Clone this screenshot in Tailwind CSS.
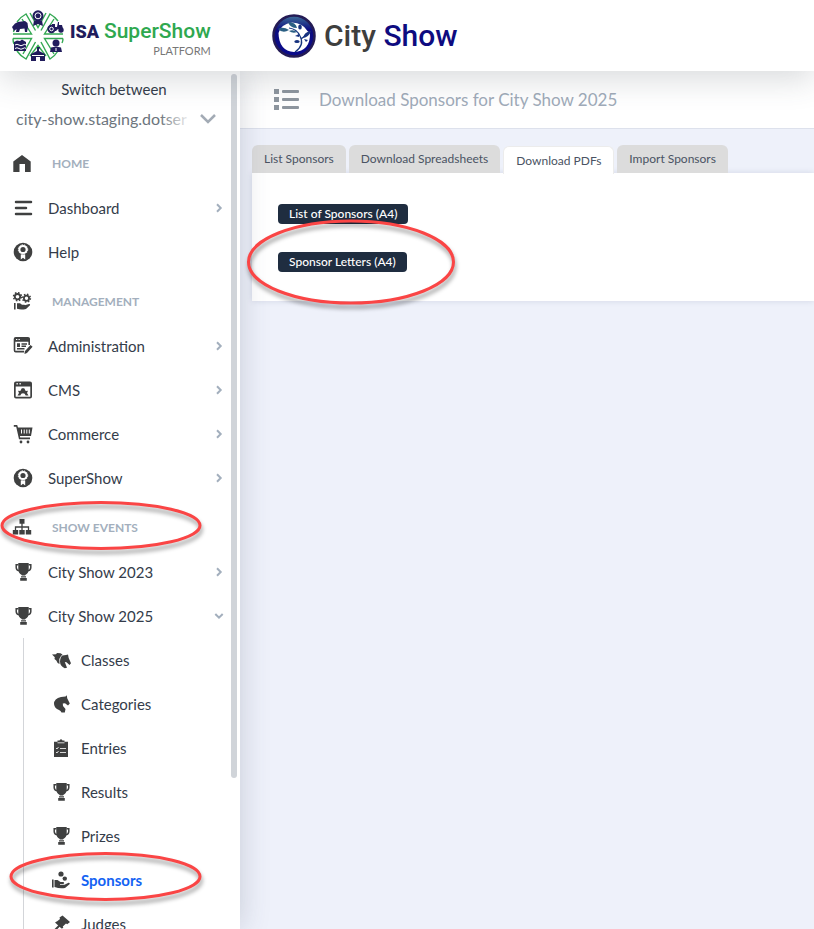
<!DOCTYPE html>
<html lang="en">
<head>
<meta charset="utf-8">
<meta name="viewport" content="width=device-width, initial-scale=1">
<title>Download Sponsors for City Show 2025</title>
<script src="https://cdn.jsdelivr.net/npm/@tailwindcss/browser@4"></script>
</head>
<body class="relative flex h-screen flex-col overflow-hidden bg-[#eef1fa] font-[Lato,sans-serif] text-[15px] text-[#343c4a]">

<!-- Icon library -->
<svg class="hidden" aria-hidden="true">
  <symbol id="home" viewBox="0 0 20 20"><path d="M10 1 18.700 7.400V18H13V10H7.500V18H1.300V7.400Z"/></symbol>
  <symbol id="lines" viewBox="0 0 20 20"><g fill="none" stroke="currentColor" stroke-width="2.500" stroke-linecap="round"><path d="M3 4H18M3 10H13M3 16H18"/></g></symbol>
  <symbol id="rosette" viewBox="0 0 20 20"><circle cx="10" cy="10" r="9.300"/><circle cx="10" cy="7.500" r="3.600" fill="none" stroke="#fff" stroke-width="2"/><circle cx="10" cy="7.500" r="4.700" fill="none" stroke="#fff" stroke-width="1" stroke-dasharray="1.500 1"/><path fill="#fff" d="M7.800 12.500H12.200V17.500L10 15.800 7.800 17.500Z"/></symbol>
  <symbol id="gears" viewBox="0 0 20 20"><g fill="none" stroke="currentColor"><circle cx="5.500" cy="4.700" r="2.700" stroke-width="1.800"/><circle cx="5.500" cy="4.700" r="4" stroke-width="1.500" stroke-dasharray="1.600 1.540"/><circle cx="14.500" cy="6.200" r="2.600" stroke-width="1.800"/><circle cx="14.500" cy="6.200" r="3.900" stroke-width="1.500" stroke-dasharray="1.500 1.560"/></g><path d="M2 11H3.600V17.500H2ZM5 11.300H8L10 12.700H12.500Q13.500 13.700 12 14.200H9.500L17 12Q18.600 12 18 13.300L14 17Q9 18.300 5 16.800Z"/></symbol>
  <symbol id="form" viewBox="0 0 20 20"><g fill="none" stroke="currentColor" stroke-width="1.600"><path d="M16.200 9V3Q16.200 1.700 15 1.700H2.700Q1.500 1.700 1.500 3V14.200Q1.500 15.600 2.700 15.600H11"/><path d="M8.500 8H14M8.500 10.300H13M4 12.800H11.500"/></g><path d="M1.500 2H16.500V5.800H1.500ZM4 7.300H7V11H4ZM17.500 9 19.600 10.800 14 17 11.500 18 11.800 15.300Z"/><path d="M3 3.500H4.300M5.500 3.500H6.800" stroke="#fff"/></symbol>
  <symbol id="cms" viewBox="0 0 20 20"><path fill-rule="evenodd" d="M3 1.500H17Q19 1.500 19 3.500V16.500Q19 18.500 17 18.500H3Q1 18.500 1 16.500V3.500Q1 1.500 3 1.500ZM2.700 6.500V16.700H17.300V6.500Z"/><path d="M3.500 3.700H4.800M6.500 3.700H7.800" stroke="#fff" stroke-width="1.500"/><path d="M4.500 15.500 6 13 5 10.800 7.300 11 8.800 8.300H11.200L12.700 11 15 10.800 14 13 15.500 15.500H12.700Q12 13.200 10 13.200T7.300 15.500Z"/></symbol>
  <symbol id="cart" viewBox="0 0 20 20"><path d="M.8 1H4.200L5 3.500H19.500L18 12H6.900L7.200 13.600H17V15.200H6L3.200 2.700H.8Z"/><path d="M8.500 5.500V9.500M11.200 5.500V9.500M13.800 5.500V9.500M16.300 5.500V9.500" stroke="#fff" stroke-width="1"/><circle cx="8" cy="18" r="1.400"/><circle cx="15" cy="18" r="1.400"/></symbol>
  <symbol id="tree" viewBox="0 0 20 20"><path d="M7.500 1H12.500V5.800H7.500ZM.8 12H6.200V16.500H.8ZM7.300 12H12.700V16.500H7.300ZM13.800 12H19.200V16.500H13.800Z"/><path d="M3.500 12.500V9H16.500V12.500M10 5V12.500" fill="none" stroke="currentColor" stroke-width="1.300"/></symbol>
  <symbol id="trophy" viewBox="0 0 20 20"><path d="M5.300 .9H15.700V7Q15.700 11.500 12.200 12.900V13.600H8.800V12.900Q5.300 11.500 5.300 7ZM8 14.300H13V15.400H8ZM7.200 16H13.800V18.700H7.200Z"/><path d="M5.500 2.700H3.200V5.500Q3.300 8.200 6 8.700M15.500 2.700H17.800V5.500Q17.700 8.200 15 8.700" fill="none" stroke="currentColor" stroke-width="1.500"/></symbol>
  <symbol id="horses" viewBox="0 0 20 20"><path d="M1 4.500 5 4.200 6 3 9.500 3.300 11.500 4.600 10 6 8.300 9 8.500 14Q6 13 5.300 10.500L3.500 9 3.800 7.200Z"/><path d="M11.300 5.500 15 5 17 4.500 17.700 8 20 13.200 18.500 15 15.500 12.300 13.800 12 16 17.700 13.800 18.300Q9 16 9 11.500Q9.300 7 11.300 5.500Z"/></symbol>
  <symbol id="horse" viewBox="0 0 20 20"><path d="M10 3 14.500 2.600 15.800 1.300 16.200 4.300 18.800 9.500 17 11.500 14 9.300 11.800 9.600 12 12 14.500 15 13.800 18.500H10.500Q9.800 16.800 8 16Q3.500 14.500 3 10Q3 4.500 10 3Z"/></symbol>
  <symbol id="clipboard" viewBox="0 0 20 20"><path d="M3 3.800H6.500V2.500H8.500Q10 -.2 11.500 2.500H13.500V3.800H17V19H3Z"/><path d="M6.500 4.800H13.500M5 10 6 11 7.500 9M5 14 6 15 7.500 13M9 10.500H15M9 14.500H15" fill="none" stroke="#fff" stroke-width=".8"/></symbol>
  <symbol id="give" viewBox="0 0 20 20"><circle cx="10" cy="4" r="2.600"/><circle cx="13.800" cy="8.600" r="2.200"/><path d="M1 9.500H2.600V17.500H1ZM3.500 10H6.500L9.500 12H12.500Q14 13.500 12 14H9V14.700H13.500L17.500 12.700Q19.500 12.500 18.500 14.200L14 18Q9 19 3.500 17Z"/></symbol>
  <symbol id="gavel" viewBox="0 0 20 20"><path d="M8.500 3.500 11.500 1.500 19 8 16.200 10.200 15 9.600 11.800 12.500 12.300 14 10.500 14.500 4 8.500 6.500 7 9 5Z"/><path d="M9 11 2 18" stroke="currentColor" stroke-width="2"/></symbol>
  <symbol id="chev" viewBox="0 0 8 10"><path d="M2 1.300 5.700 5 2 8.700" fill="none" stroke="currentColor" stroke-width="2"/></symbol>
</svg>

<header class="relative z-20 flex h-[71px] shrink-0 items-center bg-white shadow-[0_8px_32px_rgba(60,70,80,0.2)]">
  <a href="#" class="flex w-60 shrink-0 items-center gap-1.5 pl-3" aria-label="ISA SuperShow Platform">
    <svg class="size-[52px] shrink-0" viewBox="0 0 52 52" aria-hidden="true">
      <g fill="none" stroke="#34a853" stroke-width="1.400">
        <path d="M5 12A25 25 0 0 1 14 4L23.500 20.500M29 20.500 38 4A25 25 0 0 1 46 11M18 3 26 17.500 34 3M1.500 22A25 25 0 0 1 2 20M10 9 19.500 24H1M42 9 32.500 24H51M1 28.500H19.500L11 44M51 28.500H32.500L42 44M5 41A25 25 0 0 0 14 49L23.500 32M29 32 38 49A25 25 0 0 0 46 41M18 46 26 35.500 34 46M1 28.500Q1 32 2 34M51 28.500Q51 31 50 33"/>
      </g>
      <g fill="#211c5c">
        <circle cx="26" cy="5.800" r="5.500"/><path d="M22 10.500H30L31 16 26 14 21 16Z"/>
        <path d="M0 17 3 13.500 6 12 13 11 15.500 13 16 17 15 22H13L12.500 18.500 8 19 7 22H4L4.500 19 2 21Z"/>
        <path d="M40 14H43V17H45L46 12H47V15H50L51 19H46L44 21H40Z"/><circle cx="39.500" cy="19" r="4.200"/><circle cx="49" cy="20" r="2.700"/>
        <path d="M2 32 5 30.500 8 31 10 29.500 14 32V41H2Z"/>
        <circle cx="44" cy="33" r="3.500"/><path d="M38 42 39 37.500 44 36.500 49 37.500 50 42Z"/>
        <path d="M19 51V44L25 41V37H28V38.500H27V41L33 44V51H28V47H24V51Z"/>
      </g>
      <g fill="none" stroke="#fff"><circle cx="26" cy="5.800" r="3"/><circle cx="39.500" cy="19" r="1.800"/><path d="M3 35Q5 33.500 7 35T11 35 14 35M3 38.500Q5 37 7 38.500T11 38.500 14 38.500M44 38V41M20 45.500H32"/></g>
    </svg>
    <span class="flex flex-col items-end pt-1">
      <span class="flex items-baseline gap-[5px] leading-[26px]"><b class="font-[Roboto,sans-serif] text-[18px] font-black text-[#211c5c]">ISA</b><span class="font-[Roboto,sans-serif] text-[21px] font-medium text-[#2fa84f]">SuperShow</span></span>
      <span class="text-[11px] leading-3 text-[#777]">PLATFORM</span>
    </span>
  </a>
  <a href="#" class="flex items-center gap-2 pl-8">
    <svg class="size-11 shrink-0" viewBox="0 0 44 44" aria-hidden="true">
      <defs><linearGradient id="ring" x1="0" y1="0" x2="0" y2="1"><stop offset="0" stop-color="#3f7299"/><stop offset=".35" stop-color="#0c0c80"/><stop offset="1" stop-color="#0b0b8c"/></linearGradient></defs>
      <circle cx="22" cy="22" r="20.500" fill="url(#ring)" stroke="#241b55" stroke-width="2.500"/>
      <path fill="#fff" d="M6.500 19Q9 10 20 8.500Q31 9 35.500 17L38 19Q38.500 37 22 38Q7 37 6.500 19Z"/>
      <path d="M17 14Q25 15 28 22Q33 31 23 38M29 25 38 18" fill="none" stroke="#16357e" stroke-width="1.200"/>
      <g fill="#2a5f83"><path d="M6 15Q11 12 17 16Q11 20 6 15Z"/><path d="M16 8Q24 8 25 14Q18 14 16 8Z"/><path d="M17 17Q21 15 25 18Q21 20 17 17Z"/></g>
      <g fill="#17327f"><ellipse cx="28" cy="13" rx="1.800" ry="2.500"/><path d="M31 24Q32 18 39 17Q37 23 31 24Z"/><ellipse cx="25" cy="27.500" rx="2.700" ry="1.600"/><path d="M23 22 27 20 27 23ZM32 25 36 26 34 28Z"/></g>
    </svg>
    <span class="font-[Roboto,sans-serif] text-[30px] leading-9 font-medium text-[#3e3e3e]">City <span class="text-[#0e0b80]">Show</span></span>
  </a>
</header>

<div class="flex min-h-0 flex-1">
  <aside class="relative z-10 w-60 shrink-0 bg-white shadow-[0_0_28px_rgba(60,70,90,0.22)]">
    <div class="h-full overflow-hidden">
      <div class="h-[65px] pt-2">
        <label for="site" class="block pr-3 text-center text-[15px] leading-5">Switch between</label>
        <div class="relative mt-2 flex items-center pl-4 text-[#6c757d]">
          <select id="site" class="w-44 appearance-none overflow-hidden bg-transparent text-base leading-6 whitespace-nowrap outline-none"><option>city-show.staging.dotser</option></select>
          <span class="pointer-events-none absolute left-40 h-6 w-8 bg-linear-to-r from-white/0 to-white"></span>
          <svg class="ml-2 h-3 w-4 shrink-0 text-[#a3abb5]" viewBox="0 0 16 12" aria-hidden="true"><path d="M1 2 8 9 15 2" fill="none" stroke="currentColor" stroke-width="2.500"/></svg>
        </div>
      </div>
      <nav aria-label="Main" class="whitespace-nowrap">
        <h2 class="flex h-[50px] items-center gap-5 pt-1.5 pl-3 text-xs font-bold text-[#a3afbd]"><svg class="size-5 fill-current text-[#3f4040]"><use href="#home"/></svg>HOME</h2>
        <a href="#" class="flex h-11 items-center pr-[17px] pl-[13px]"><svg class="mr-[15px] size-5 fill-current text-[#3f4040]"><use href="#lines"/></svg><span class="flex-1">Dashboard</span><svg class="h-2.5 w-2 text-[#a3afbd]"><use href="#chev"/></svg></a>
        <a href="#" class="flex h-11 items-center pr-[17px] pl-[13px]"><svg class="mr-[15px] size-5 fill-current text-[#3f4040]"><use href="#rosette"/></svg><span class="flex-1">Help</span></a>
        <h2 class="flex h-[50px] items-center gap-5 pt-1.5 pl-3 text-xs font-bold text-[#a3afbd]"><svg class="size-5 fill-current text-[#3f4040]"><use href="#gears"/></svg>MANAGEMENT</h2>
        <a href="#" class="flex h-11 items-center pr-[17px] pl-[13px]"><svg class="mr-[15px] size-5 fill-current text-[#3f4040]"><use href="#form"/></svg><span class="flex-1">Administration</span><svg class="h-2.5 w-2 text-[#a3afbd]"><use href="#chev"/></svg></a>
        <a href="#" class="flex h-11 items-center pr-[17px] pl-[13px]"><svg class="mr-[15px] size-5 fill-current text-[#3f4040]"><use href="#cms"/></svg><span class="flex-1">CMS</span><svg class="h-2.5 w-2 text-[#a3afbd]"><use href="#chev"/></svg></a>
        <a href="#" class="flex h-11 items-center pr-[17px] pl-[13px]"><svg class="mr-[15px] size-5 fill-current text-[#3f4040]"><use href="#cart"/></svg><span class="flex-1">Commerce</span><svg class="h-2.5 w-2 text-[#a3afbd]"><use href="#chev"/></svg></a>
        <a href="#" class="flex h-11 items-center pr-[17px] pl-[13px]"><svg class="mr-[15px] size-5 fill-current text-[#3f4040]"><use href="#rosette"/></svg><span class="flex-1">SuperShow</span><svg class="h-2.5 w-2 text-[#a3afbd]"><use href="#chev"/></svg></a>
        <h2 class="flex h-[50px] items-center gap-5 pt-1.5 pl-3 text-xs font-bold text-[#a3afbd]"><svg class="size-5 fill-current text-[#3f4040]"><use href="#tree"/></svg>SHOW EVENTS</h2>
        <a href="#" class="flex h-11 items-center pr-[17px] pl-[13px]"><svg class="mr-[15px] size-5 fill-current text-[#3f4040]"><use href="#trophy"/></svg><span class="flex-1">City Show 2023</span><svg class="h-2.5 w-2 text-[#a3afbd]"><use href="#chev"/></svg></a>
        <a href="#" class="flex h-11 items-center pr-[17px] pl-[13px]"><svg class="mr-[15px] size-5 fill-current text-[#3f4040]"><use href="#trophy"/></svg><span class="flex-1">City Show 2025</span><svg class="h-2.5 w-2 rotate-90 text-[#a3afbd]"><use href="#chev"/></svg></a>
        <div class="ml-[23px] border-l border-[#d3d5d9] pl-[27px]">
          <a href="#" class="flex h-11 items-center gap-2.5"><svg class="size-5 fill-current text-[#3f4040]"><use href="#horses"/></svg>Classes</a>
          <a href="#" class="flex h-11 items-center gap-2.5"><svg class="size-5 fill-current text-[#3f4040]"><use href="#horse"/></svg>Categories</a>
          <a href="#" class="flex h-11 items-center gap-2.5"><svg class="size-5 fill-current text-[#3f4040]"><use href="#clipboard"/></svg>Entries</a>
          <a href="#" class="flex h-11 items-center gap-2.5"><svg class="size-5 fill-current text-[#3f4040]"><use href="#trophy"/></svg>Results</a>
          <a href="#" class="flex h-11 items-center gap-2.5"><svg class="size-5 fill-current text-[#3f4040]"><use href="#trophy"/></svg>Prizes</a>
          <a href="#" aria-current="page" class="flex h-11 items-center gap-2.5 font-bold text-[#1463f3]"><svg class="size-5 fill-current text-[#3f4040]"><use href="#give"/></svg>Sponsors</a>
          <a href="#" class="flex h-11 items-center gap-2.5"><svg class="size-5 fill-current text-[#3f4040]"><use href="#gavel"/></svg>Judges</a>
        </div>
      </nav>
    </div>
    <span class="absolute top-[3px] right-[3px] h-[704px] w-1.5 rounded-full bg-[#d0d4d9]"></span>
  </aside>

  <main class="min-w-0 flex-1">
    <div class="flex h-[58px] items-center gap-5 border-b border-[#dde1ec] bg-white pl-[34px]">
      <svg class="h-[21px] w-[25px] fill-[#8e969f]" viewBox="0 0 25 21" aria-hidden="true"><path d="M0 0H5V5H0ZM0 8H5V13H0ZM0 16H5V21H0Z"/><rect x="8" y="1" width="17" height="3" rx="1"/><rect x="8" y="9" width="17" height="3" rx="1"/><rect x="8" y="17" width="17" height="3" rx="1"/></svg>
      <h1 class="text-[17px] text-[#a0abb9]">Download Sponsors for City Show 2025</h1>
    </div>
    <div class="pt-4 pl-3">
      <div role="tablist" class="flex gap-[3px] text-xs whitespace-nowrap text-[#4a5363]">
        <button role="tab" class="h-7 rounded-t-md bg-[#dcdcdc] px-3">List Sponsors</button>
        <button role="tab" class="h-7 rounded-t-md bg-[#dcdcdc] px-3">Download Spreadsheets</button>
        <button role="tab" aria-selected="true" class="relative z-1 mt-px h-7 rounded-t-md border border-b-0 border-[#ececec] bg-white px-3">Download PDFs</button>
        <button role="tab" class="h-7 rounded-t-md bg-[#dcdcdc] px-3">Import Sponsors</button>
      </div>
      <section role="tabpanel" class="-mt-px flex h-32 flex-col items-start gap-7 bg-white pt-[31px] pl-[26px] shadow-[0_0_6px_rgba(60,70,110,0.15)]">
        <button class="h-5 rounded bg-[#1f2d40] px-[11px] text-xs leading-5 font-medium text-white">List of Sponsors (A4)</button>
        <button class="h-5 rounded bg-[#1f2d40] px-[11px] text-xs leading-5 font-medium text-white">Sponsor Letters (A4)</button>
      </section>
    </div>
  </main>
</div>

<!-- Callouts over the page -->
<svg class="pointer-events-none absolute top-0 left-0 z-30 h-[929px] w-[814px] drop-shadow-[1px_4px_2px_rgba(0,0,0,0.4)]" viewBox="0 0 814 929" aria-hidden="true">
  <g fill="none" stroke="#fa4545" stroke-width="3"><ellipse cx="101" cy="525.500" rx="99" ry="23"/><ellipse cx="105.500" cy="876.500" rx="94.500" ry="23"/><ellipse cx="351" cy="262" rx="102.500" ry="41"/></g>
</svg>
</body>
</html>
